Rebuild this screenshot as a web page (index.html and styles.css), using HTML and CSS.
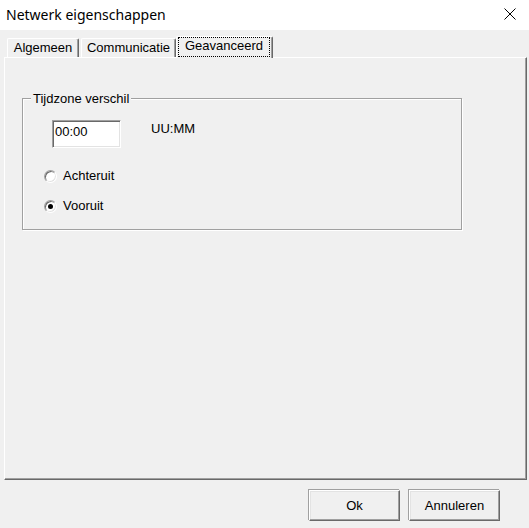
FILE: index.html
```html
<!DOCTYPE html>
<html lang="nl">
<head>
<meta charset="utf-8">
<title>Netwerk eigenschappen</title>
<link rel="stylesheet" href="styles.css">
</head>
<body>
<div class="window">
  <div class="titlebar">
    <span class="title">Netwerk eigenschappen</span>
    <svg class="close" width="12" height="12" viewBox="0 0 12 12" aria-label="Sluiten">
      <path d="M0.5 0.5 L11.5 11.5 M11.5 0.5 L0.5 11.5" stroke="#000" stroke-width="1" fill="none"/>
    </svg>
  </div>
  <div class="tabs">
    <div class="tab tab-algemeen">Algemeen</div>
    <div class="tab tab-comm">Communicatie</div>
    <div class="tab tab-active"><span class="focus">Geavanceerd</span></div>
  </div>
  <div class="panel">
    <div class="group">
      <div class="group-title">Tijdzone verschil</div>
      <div class="time-row">
        <div class="input">00:00</div>
        <span class="hint">UU:MM</span>
      </div>
      <div class="radio r1"><span class="dot"></span><span>Achteruit</span></div>
      <div class="radio r2"><span class="dot checked"></span><span>Vooruit</span></div>
    </div>
  </div>
  <div class="buttons">
    <button class="btn">Ok</button>
    <button class="btn">Annuleren</button>
  </div>
</div>
</body>
</html>
```
FILE: styles.css
```css
html, body {
  margin: 0;
  padding: 0;
  background: #f0f0f0;
}
body {
  font-family: "Liberation Sans", Arial, sans-serif;
  font-size: 13px;
  color: #000;
}
.window {
  width: 529px;
  height: 528px;
  overflow: hidden;
}
.titlebar {
  height: 30px;
  background: #ffffff;
  display: flex;
  align-items: flex-start;
}
.title {
  font-family: "Noto Sans", "Liberation Sans", sans-serif;
  font-size: 14px;
  line-height: 20px;
  margin: 5px 0 0 6px;
}
.close {
  margin: 8px 13px 0 auto;
  display: block;
}
.tabs {
  display: flex;
  align-items: flex-end;
  gap: 2px;
  margin: 6px 0 0 7px;
}
.tab {
  box-sizing: border-box;
  height: 19px;
  padding-top: 1px;
  line-height: 15px;
  text-align: center;
  border-top: 1px solid #ffffff;
  border-left: 1px solid #ffffff;
  border-right: 1px solid #696969;
  box-shadow: inset -1px 0 0 #a0a0a0;
  border-radius: 2px 2px 0 0;
  background: #f0f0f0;
}
.tab-algemeen { width: 72px; }
.tab-comm { width: 95px; }
.tab-active {
  width: 97px;
  height: 22px;
  margin: 0 0 -1px -2px;
  padding: 0 2px 0 1px;
  position: relative;
  z-index: 1;
}
.focus {
  display: block;
  border: 1px dotted #000;
  padding-bottom: 3px;
  line-height: 15px;
}
.panel {
  box-sizing: border-box;
  width: 523px;
  height: 423px;
  margin-left: 4px;
  border: 1px solid;
  border-color: #ffffff #696969 #696969 #ffffff;
  box-shadow: inset -1px -1px 0 #a0a0a0;
  padding-top: 40px;
  padding-left: 17px;
}
.group {
  box-sizing: border-box;
  width: 440px;
  height: 132px;
  border: 1px solid #a0a0a0;
  box-shadow: 1px 1px 0 #ffffff, inset 1px 1px 0 #ffffff;
}
.group-title {
  width: fit-content;
  margin: -8px 0 0 8px;
  padding: 0 2px;
  line-height: 15px;
  background: #f0f0f0;
}
.time-row {
  display: flex;
  align-items: flex-start;
  margin: 14px 0 0 29px;
}
.input {
  box-sizing: border-box;
  width: 69px;
  height: 28px;
  background: #ffffff;
  border: 1px solid;
  border-color: #a0a0a0 #ffffff #ffffff #a0a0a0;
  box-shadow: inset 1px 1px 0 #696969, inset -1px -1px 0 #e3e3e3;
  padding: 3px 0 0 2px;
  line-height: 15px;
}
.hint {
  margin: 1px 0 0 30px;
  line-height: 15px;
}
.radio {
  display: flex;
  align-items: flex-start;
  margin-left: 21px;
  line-height: 15px;
}
.r1 { margin-top: 20px; }
.r2 { margin-top: 15px; }
.dot {
  box-sizing: border-box;
  width: 13px;
  height: 13px;
  margin: 2px 6px 0 0;
  border-radius: 50%;
  background: #ffffff;
  border: 1px solid;
  border-color: #a0a0a0 #ffffff #ffffff #a0a0a0;
  box-shadow: inset 1px 1px 0 #696969, inset -1px -1px 0 #e3e3e3;
  display: flex;
  align-items: center;
  justify-content: center;
}
.dot.checked::after {
  content: "";
  width: 5px;
  height: 5px;
  border-radius: 50%;
  background: #000;
}
.buttons {
  display: flex;
  justify-content: flex-end;
  gap: 9px;
  margin: 10px 29px 0 0;
}
.btn {
  box-sizing: border-box;
  width: 91px;
  height: 31px;
  font-family: "Liberation Sans", Arial, sans-serif;
  font-size: 13px;
  color: #000;
  background: #f0f0f0;
  border: 1px solid;
  border-color: #ffffff #696969 #696969 #ffffff;
  box-shadow: inset -1px -1px 0 #a0a0a0, inset 1px 1px 0 #e3e3e3, -1px -1px 0 #a0a0a0;
  padding: 0;
  margin: 0;
}
```
